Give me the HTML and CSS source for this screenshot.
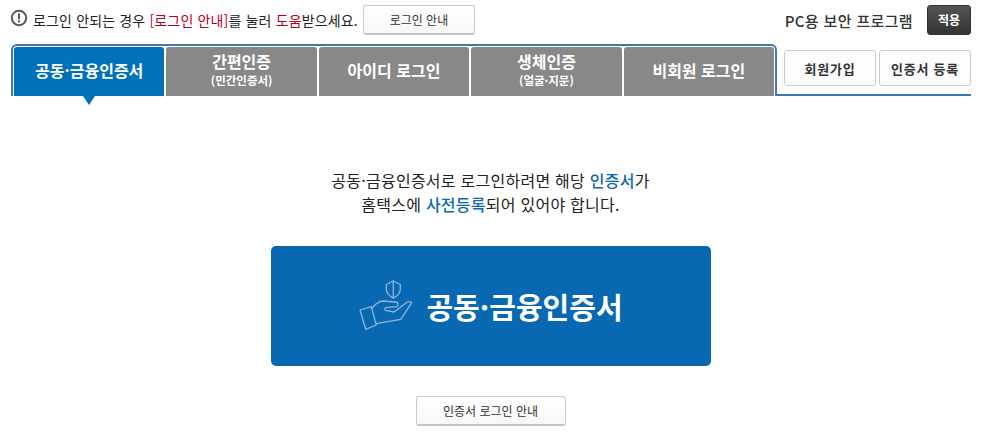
FILE: index.html
```html
<!DOCTYPE html>
<html lang="ko">
<head>
    <meta charset="UTF-8" />
    <title>공동·금융인증서 로그인</title>
    <link rel="stylesheet" href="styles.css">
</head>
<body>
<div class="login-wrap">
    <header class="top-row">
        <svg class="notice-icon" width="18" height="18" viewBox="0 0 18 18">
            <circle cx="9" cy="9" r="7.2" fill="none" stroke="#555" stroke-width="2"/>
            <rect x="8" y="4.4" width="2" height="5.800" fill="#555"/>
            <rect x="8" y="11.400" width="2" height="2" fill="#555"/>
        </svg>
        <p class="notice">로그인 안되는 경우 <b class="red">[로그인 안내]</b>를 눌러 <b class="red">도움</b>받으세요.</p>
        <button class="btn btn-guide">로그인 안내</button>
        <span class="security">PC용 보안 프로그램</span>
        <button class="btn-dark">적용</button>
    </header>

    <nav class="tab-row">
        <ul class="tabs">
            <li class="tab active">공동·금융인증서</li>
            <li class="tab">간편인증<small>(민간인증서)</small></li>
            <li class="tab">아이디 로그인</li>
            <li class="tab">생체인증<small>(얼굴·지문)</small></li>
            <li class="tab">비회원 로그인</li>
        </ul>
        <div class="tab-side">
            <button class="btn-side">회원가입</button>
            <button class="btn-side">인증서 등록</button>
        </div>
    </nav>

    <main class="content">
        <p class="desc">공동·금융인증서로 로그인하려면 해당 <span class="blue">인증서</span>가<br>홈택스에 <span class="blue">사전등록</span>되어 있어야 합니다.</p>
        <button class="cert-btn">
            <svg width="64" height="60" viewBox="0 0 64 60" fill="none" stroke="#8fb6d8" stroke-width="1.300" stroke-linejoin="round" stroke-linecap="round">
                <path d="M39.300 5l7 3.500v4.500c0 3.800-3 7-7 9-4-2-7-5.200-7-9V8.500z"/>
                <path d="M39.300 5v17"/>
                <path d="M6 34l11.300-3.300 5 18.300-10.600 4.300z"/>
                <path d="M17.300 32.700l4.400-4.400c2.200-1.800 4.300-3 6.600-3.300l13.400 1c1.600.2 2.300 1 2.300 2 0 1.500-.6 2.500-1.300 2.700l-11 1c-1.200.4-1.200 2.200 0 2.600l8.300 1.700 13.300-10c1.500-.8 3.800-.2 4.400.700L46.700 43.300l-24.400 4.400"/>
            </svg>
            <span>공동·금융인증서</span>
        </button>
        <button class="btn btn-cert-guide">인증서 로그인 안내</button>
    </main>
</div>
</body>
</html>
```
FILE: styles.css
```css
* {
    box-sizing: border-box;
    font-family: "Noto Sans CJK KR", "Noto Sans", sans-serif;
}
html, body {
    margin: 0;
    padding: 0;
    background: white;
    overflow: hidden;
}
.login-wrap {
    width: 961px;
    margin-left: 10px;
}
button {
    padding: 0;
    cursor: pointer;
}
.top-row {
    display: flex;
    align-items: center;
    height: 39px;
}
.notice-icon {
    margin: 0 5px 4px 0;
}
.notice {
    margin: 0 5px 0 0;
    font-size: 14px;
    letter-spacing: 0.15px;
    color: #222;
    white-space: nowrap;
}
.notice b {
    font-weight: 400;
}
.red {
    color: #b8001f;
}
.btn {
    background: linear-gradient(#fff, #f7f7f7);
    border: 1px solid #ccc;
    border-bottom: 2px solid #c4c4c4;
    border-radius: 3px;
    font-size: 12px;
    color: #333;
}
.btn-guide {
    width: 112px;
    height: 30px;
}
.security {
    margin-left: auto;
    margin-right: 14px;
    padding-top: 2px;
    font-size: 15px;
    font-weight: 500;
    letter-spacing: 0.35px;
    color: #333;
}
.btn-dark {
    width: 44px;
    height: 30px;
    background: linear-gradient(#555, #333);
    border: 1px solid #333;
    border-radius: 3px;
    color: white;
    font-size: 12px;
    font-weight: 700;
}
.tab-row {
    display: flex;
    margin-top: 5px;
    margin-left: 1px;
}
.tabs {
    display: flex;
    gap: 2px;
    width: 766px;
    height: 52px;
    margin: 0;
    padding: 1px 1px 0;
    list-style: none;
    background: white;
    border: 2px solid #3f77b5;
    border-bottom: none;
    border-radius: 6px 6px 0 0;
}
.tab {
    position: relative;
    flex: 1;
    display: flex;
    flex-direction: column;
    align-items: center;
    justify-content: center;
    padding-bottom: 4px;
    background: #888;
    border-radius: 3px 3px 0 0;
    color: white;
    font-size: 16px;
    font-weight: 700;
    line-height: 20px;
}
.tab small {
    font-size: 11.5px;
    line-height: 16px;
    margin-top: 1px;
}
.tab.active {
    background: #0070b9;
}
.tab.active::after {
    content: "";
    position: absolute;
    left: 69px;
    top: 100%;
    border-style: solid;
    border-width: 9px 6px 0;
    border-color: #0070b9 transparent transparent;
}
.tab-side {
    flex: 1;
    display: flex;
    justify-content: flex-end;
    gap: 3px;
    padding-top: 6px;
    height: 52px;
    border-bottom: 2px solid #3f77b5;
}
.btn-side {
    width: 92px;
    height: 36px;
    background: #fdfdfd;
    border: 1px solid #ccc;
    border-radius: 3px;
    font-size: 13px;
    font-weight: 700;
    letter-spacing: 0.8px;
    color: #333;
}
.content {
    display: flex;
    flex-direction: column;
    align-items: center;
    padding-top: 72px;
    margin-left: -10px;
    width: 981px;
}
.desc {
    margin: 0;
    font-size: 16px;
    line-height: 24px;
    letter-spacing: 0.25px;
    text-align: center;
    color: #222;
}
.blue {
    color: #0a6ab3;
    font-weight: 500;
}
.cert-btn {
    display: flex;
    align-items: center;
    justify-content: center;
    gap: 8px;
    width: 440px;
    height: 120px;
    margin-top: 30px;
    padding-right: 4px;
    background: #0868b1;
    border: none;
    border-radius: 5px;
    color: white;
    font-size: 29px;
    font-weight: 700;
}
.btn-cert-guide {
    width: 150px;
    height: 30px;
    margin-top: 30px;
}
```
